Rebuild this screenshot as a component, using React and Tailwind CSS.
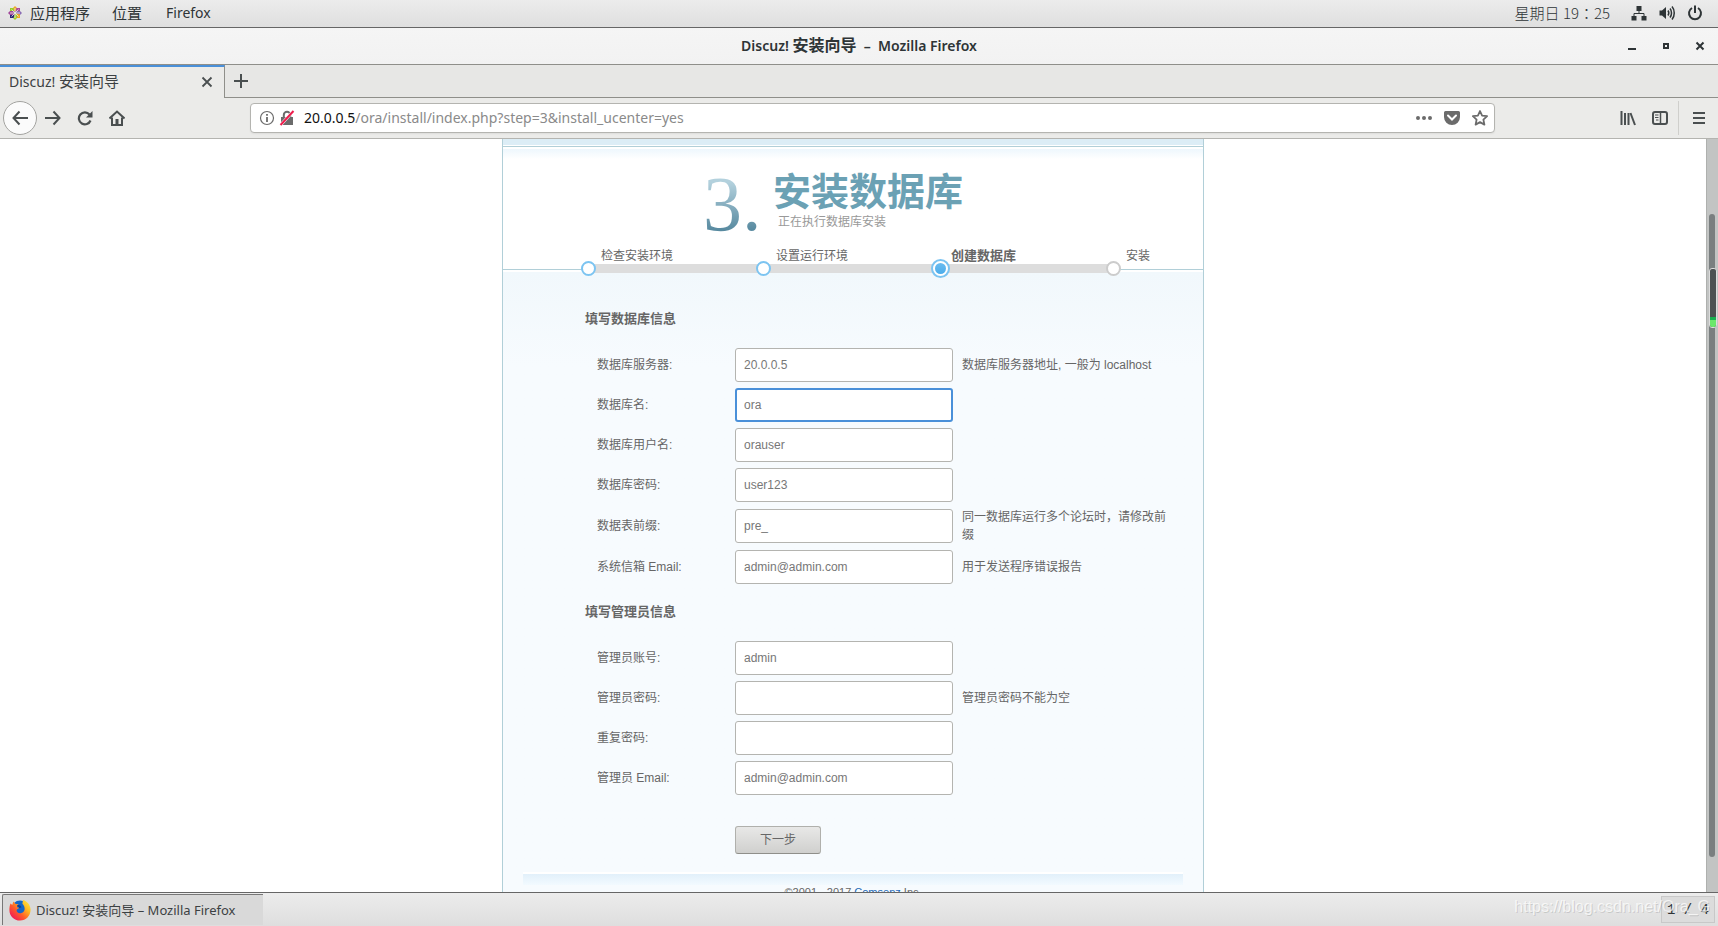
const UI_FONT = "font-['Noto_Sans','Noto_Sans_CJK_SC',sans-serif]";
const PAGE_FONT = "font-['Liberation_Sans','Noto_Sans_CJK_SC',sans-serif]";

const steps = [
  { label: '检查安装环境', state: 'done' },
  { label: '设置运行环境', state: 'done' },
  { label: '创建数据库', state: 'current' },
  { label: '安装', state: 'todo' },
];

const dbFields = [
  { id: 'dbhost', label: '数据库服务器:', value: '20.0.0.5', tip: '数据库服务器地址, 一般为 localhost' },
  { id: 'dbname', label: '数据库名:', value: 'ora', active: true },
  { id: 'dbuser', label: '数据库用户名:', value: 'orauser' },
  { id: 'dbpw', label: '数据库密码:', value: 'user123' },
  { id: 'tablepre', label: '数据表前缀:', value: 'pre_', tip: '同一数据库运行多个论坛时，请修改前缀' },
  { id: 'adminemail', label: '系统信箱 Email:', value: 'admin@admin.com', tip: '用于发送程序错误报告' },
];

const adminFields = [
  { id: 'username', label: '管理员账号:', value: 'admin' },
  { id: 'password', label: '管理员密码:', type: 'password', value: '', tip: '管理员密码不能为空' },
  { id: 'password2', label: '重复密码:', type: 'password', value: '' },
  { id: 'email', label: '管理员 Email:', value: 'admin@admin.com' },
];

function Icon({ size = 16, className = '', children }) {
  return (
    <svg
      width={size}
      height={size}
      viewBox="0 0 16 16"
      fill="none"
      stroke="currentColor"
      strokeWidth="2"
      className={`shrink-0 ${className}`}
      aria-hidden="true"
    >
      {children}
    </svg>
  );
}

function CentosLogo() {
  return (
    <svg width="14" height="14" viewBox="0 0 14 14" className="shrink-0" aria-hidden="true">
      <path d="M7 0l2 2v4.500L7 7 5 6.500V2z" fill="#efa724" />
      <path d="M2 2h3.500l1.500 5-5-1.500z" fill="#9ccd2a" />
      <path d="M12 2v3.500L7 7l1.500-5z" fill="#b04a9c" />
      <path d="M14 7l-2 2H7.500L7 7l.5-2H12z" fill="#8a6cb4" />
      <path d="M12 12H8.500L7 7l5 1.500z" fill="#efa724" />
      <path d="M7 14l-2-2V7.500L7 7l2 .5V12z" fill="#9ccd2a" />
      <path d="M2 12V8.500L7 7l-1.500 5z" fill="#262577" />
      <path d="M0 7l2-2h4.500L7 7l-.5 2H2z" fill="#a0479a" />
      <path d="M7 2v10M2 7h10M3.500 3.500l7 7M10.500 3.500l-7 7" stroke="#ececec" strokeWidth=".8" />
    </svg>
  );
}

function FirefoxLogo() {
  return (
    <svg width="22" height="22" viewBox="0 0 22 22" className="shrink-0" aria-hidden="true">
      <defs>
        <linearGradient id="fox" x1="1" y1="0" x2="0.100" y2="0.900">
          <stop offset="0" stopColor="#fff44f" />
          <stop offset=".35" stopColor="#ffb81f" />
          <stop offset=".65" stopColor="#ff5a2a" />
          <stop offset="1" stopColor="#f0145a" />
        </linearGradient>
      </defs>
      <circle cx="11" cy="10" r="8.500" fill="#1467c8" />
      <path
        d="M1.500 4.500L3.300 6 4.300 2.500 7 5.200c1.200-.3 2.200 0 2.600.8-1 .5-1.800 1-1.600 2.200l2.200.4c-.2 1.200-2 1.400-2.600 2.400-.3 2 1.800 3.600 4.200 3.200 3-.5 4.200-2.700 3.800-5.200-.3-2-1.200-3.300-2.200-4.200L14 1c3 .6 7.500 4.200 7.600 9.600C21.600 17 17 21.600 11 21.600S.4 17 .4 11c0-2.400.3-4.600 1.100-6.500z"
        fill="url(#fox)"
      />
      <path d="M8 6.200c2.500-.6 4.500.8 4.300 2.300L10.200 9z" fill="#123f8e" />
    </svg>
  );
}

function TopPanel() {
  return (
    <header className="flex h-7 shrink-0 items-center border-b border-[#666] bg-linear-to-b from-[#ececec] to-[#dfdfdf] pr-[15px] pb-0.5 pl-2 text-sm text-[#2e3436]">
      <button className="flex items-center gap-2">
        <CentosLogo />
        <span className="text-[15px] leading-6">应用程序</span>
      </button>
      <button className="ml-[22px] text-[15px] leading-6">位置</button>
      <button className="ml-6">Firefox</button>
      <span className="ml-auto font-['Noto_Sans_CJK_TC',sans-serif] text-[15px] leading-6 font-light">星期日 19：25</span>
      <div className="ml-[21px] flex items-center gap-3">
        <Icon>
          <path d="M5.500 1h5v5h-5zM.5 11h5v4.500h-5zM10.500 11h5v4.500h-5z" fill="currentColor" stroke="none" />
          <path d="M8 5v3.500M3 11V8.500h10V11" strokeWidth="1" />
        </Icon>
        <Icon>
          <path d="M.5 5.500H3L7 2v12l-4-3.500H.5z" fill="currentColor" stroke="none" />
          <path d="M9 5.500c1 1.500 1 3.500 0 5M11 3.500c2 2.500 2 6.500 0 9M13 1.500c3 3.500 3 9.500 0 13" strokeWidth="1.500" />
        </Icon>
        <Icon>
          <path d="M5 3a6 6 0 1 0 6 0M8 .5V8" strokeWidth="2" />
        </Icon>
      </div>
    </header>
  );
}

function TitleBar() {
  return (
    <div className="grid h-[37px] shrink-0 grid-cols-[1fr_auto_1fr] items-center border-b border-[#8f8f8a] bg-linear-to-b from-[#f5f5f5] to-[#f2f2f2] text-[#2e3436]">
      <h1 className="col-start-2 pb-0.5 text-sm font-semibold">
        Discuz! <span className="text-base leading-6">安装向导</span> &nbsp;–&nbsp; Mozilla Firefox
      </h1>
      <div className="flex justify-end gap-[18px] pr-[10px]">
        <button aria-label="最小化">
          <Icon><path d="M4 11h8" /></Icon>
        </button>
        <button aria-label="最大化">
          <Icon><path d="M6 6h4v4H6z" /></Icon>
        </button>
        <button aria-label="关闭">
          <Icon><path d="M4.500 4.500l7 7M11.500 4.500l-7 7" /></Icon>
        </button>
      </div>
    </div>
  );
}

function TabStrip() {
  return (
    <div className="flex h-[33px] shrink-0 bg-[#e7e7e5] text-[#4a4f50]">
      <div className="flex w-[225px] items-center justify-between border-t-2 border-r border-t-[#4a90d9] border-r-[#8f8f8a] bg-[#ebebe9] pr-[9px] pb-1 pl-[9px]">
        <span className="text-sm text-[#3c4143]">
          Discuz! <span className="text-[15px] leading-6">安装向导</span>
        </span>
        <button aria-label="关闭标签页" className="pt-0.5">
          <Icon><path d="M3.500 3.500l9 9M12.500 3.500l-9 9" strokeWidth="1.800" /></Icon>
        </button>
      </div>
      <div className="flex flex-1 items-center border-b border-[#8f8f8a] pl-2">
        <button aria-label="新建标签页">
          <Icon><path d="M8 1v14M1 8h14" strokeWidth="2" /></Icon>
        </button>
      </div>
    </div>
  );
}

function NavBar() {
  return (
    <nav className="flex h-[41px] shrink-0 items-center border-b border-[#b4b4b0] bg-[#ebebe9] pr-[11px] pl-[3px] text-[#4a4f50]">
      <button
        aria-label="后退"
        className="flex size-[34px] items-center justify-center rounded-full border border-[#a3a3a0] bg-[#fbfbfb]"
      >
        <Icon><path d="M7.500 1.500L1.500 8l6 6.500M1.500 8H16" /></Icon>
      </button>
      <div className="ml-2 flex items-center gap-4">
        <button aria-label="前进">
          <Icon><path d="M8.500 1.500l6 6.500-6 6.500M14.500 8H0" /></Icon>
        </button>
        <button aria-label="刷新">
          <Icon>
            <path d="M12.500 4.500A6 6 0 1 0 13.500 10.500" strokeWidth="2.200" />
            <path d="M15.500 1v6.500H9z" fill="currentColor" stroke="none" />
          </Icon>
        </button>
        <button aria-label="主页">
          <Icon>
            <path d="M.5 8.500L8 1.500l7.500 7" />
            <path d="M3 7.500V15h10V7.500" />
            <path d="M6.500 9h3v6h-3z" fill="currentColor" stroke="none" />
          </Icon>
        </button>
      </div>
      <div className="ml-[125px] flex h-[30px] flex-1 items-center rounded-[4px] border border-[#b4b4b0] bg-white pr-1.5 pl-2 text-[#6b6b6b] shadow-[0_1px_2px_rgba(0,0,0,0.06)]">
        <Icon>
          <circle cx="8" cy="8" r="6.500" strokeWidth="1.200" />
          <path d="M8 7v5M8 4v1.800" strokeWidth="1.800" />
        </Icon>
        <Icon className="ml-1">
          <path d="M2 7h12v8H2z" fill="currentColor" stroke="none" />
          <path d="M4.800 7V5a3.200 3.200 0 0 1 6.400 0v2" strokeWidth="2" />
          <path d="M1.500 15L14.500 1" stroke="#fff" strokeWidth="3" />
          <path d="M1.500 15L14.500 1" stroke="#ed1c4c" strokeWidth="2" />
        </Icon>
        <div role="textbox" aria-label="地址" className="ml-[9px] flex-1 text-sm text-[#8a8a8a]">
          <span className="text-[#111]">20.0.0.5</span>/ora/install/index.php?step=3&amp;install_ucenter=yes
        </div>
        <div className="flex items-center gap-3">
          <button aria-label="页面操作">
            <Icon>
              <path d="M2 6a2 2 0 1 0 0 4 2 2 0 0 0 0-4zM8 6a2 2 0 1 0 0 4 2 2 0 0 0 0-4zM14 6a2 2 0 1 0 0 4 2 2 0 0 0 0-4z" fill="currentColor" stroke="none" />
            </Icon>
          </button>
          <button aria-label="Pocket">
            <Icon>
              <path d="M1.500 1h13A1.500 1.500 0 0 1 16 2.500V7a8 8 0 0 1-16 0V2.500A1.500 1.500 0 0 1 1.500 1z" fill="currentColor" stroke="none" />
              <path d="M4 5.500l4 4 4-4" stroke="#fff" strokeLinecap="round" />
            </Icon>
          </button>
          <button aria-label="收藏">
            <Icon>
              <path d="M8 1l2.100 4.600 5 .6-3.700 3.400 1 5L8 12.100l-4.400 2.500 1-5L.9 6.200l5-.6z" strokeWidth="1.800" strokeLinejoin="round" />
            </Icon>
          </button>
        </div>
      </div>
      <div className="ml-[125px] flex items-center gap-4">
        <button aria-label="书库">
          <Icon>
            <path d="M1.500 1v14M5 3v12M8.500 3v12" />
            <path d="M10.500 3l4.500 12" />
          </Icon>
        </button>
        <button aria-label="侧栏">
          <Icon>
            <rect x="1" y="2" width="14" height="12" rx="2" />
            <path d="M8.500 2v12" strokeWidth="1.500" />
            <path d="M3 5h3.500M3 7.500h3.500M4 10h2.500" strokeWidth="1" />
          </Icon>
        </button>
      </div>
      <div className="ml-[10px] h-[34px] w-px bg-[#cfcfcc]" />
      <button aria-label="打开菜单" className="ml-3">
        <Icon><path d="M2 3h12M2 8h12M2 13h12" /></Icon>
      </button>
    </nav>
  );
}

function StepDot({ state }) {
  if (state === 'current') {
    return (
      <span className="-ml-[7px] flex size-[19px] shrink-0 items-center justify-center rounded-full border-2 border-[#7cc4f1] bg-white">
        <span className="size-[11px] rounded-full bg-linear-to-b from-[#6bbcf0] to-[#4badeb]" />
      </span>
    );
  }
  return (
    <span
      className={`-ml-[7px] size-[15px] shrink-0 rounded-full border-2 bg-white ${
        state === 'done' ? 'border-[#7cc4f1]' : 'border-[#ccc]'
      }`}
    />
  );
}

function InstallHeader() {
  return (
    <div className="mt-px border-y border-[#b1cfd8] bg-white pt-0.5">
      <div className="h-[10px] bg-linear-to-b from-[#eef7fd] to-white" />
      <div className="mt-[9px] flex pl-[200px]">
        <div className="w-[70px] bg-linear-to-b from-[#b3d1dd] from-20% to-[#457c94] bg-clip-text font-['Liberation_Serif',serif] text-[78px] leading-[72px] text-transparent">
          3.
        </div>
        <div>
          <h2 className="pt-0.5 text-[38px] leading-[44px] font-bold text-[#6ba1b4]">安装数据库</h2>
          <p className="pl-[5px] leading-4 text-[#999]">正在执行数据库安装</p>
        </div>
      </div>
      <ol className="relative mt-2 -mb-1 flex pl-[85px]">
        {steps.map((step, i) => (
          <li key={step.label} className={i < steps.length - 1 ? 'w-[175px]' : ''}>
            <div className={`pl-[13px] leading-4 ${step.state === 'current' ? 'text-[13px] font-bold' : ''}`}>
              {step.label}
            </div>
            <div className={`flex h-[9px] items-center ${i < steps.length - 1 ? 'bg-[#ddd]' : ''}`}>
              <StepDot state={step.state} />
            </div>
          </li>
        ))}
      </ol>
    </div>
  );
}

function Field({ field }) {
  return (
    <div className="flex items-center py-[3px] pl-[94px]">
      <label htmlFor={field.id} className="w-[138px]">{field.label}</label>
      <input
        id={field.id}
        type={field.type || 'text'}
        defaultValue={field.value}
        className={`h-[34px] w-[218px] rounded-[3px] bg-white text-[#777] outline-none ${
          field.active ? 'border-2 border-[#4a90d9] px-[7px]' : 'border border-[#b4b4b0] px-2'
        }`}
      />
      {field.tip && <p className="ml-[9px] w-[206px]">{field.tip}</p>}
    </div>
  );
}

function FieldGroup({ title, fields }) {
  return (
    <fieldset>
      <legend className="pt-[13px] pb-[14px] pl-[82px] text-[13px] leading-6 font-bold">{title}</legend>
      {fields.map((field) => (
        <Field key={field.id} field={field} />
      ))}
    </fieldset>
  );
}

function InstallPage() {
  return (
    <main className={`w-[702px] border-x border-[#b1cfd8] bg-white text-xs leading-[18px] text-[#666] ${PAGE_FONT}`}>
      <div className="h-1.5 bg-[#dcedf6]" />
      <InstallHeader />
      <div className="border-t-2 border-white bg-linear-to-b from-[#f1f8fc] to-[#f7fbfe] to-15% pt-[22px]">
        <form onSubmit={(e) => e.preventDefault()}>
          <FieldGroup title="填写数据库信息" fields={dbFields} />
          <FieldGroup title="填写管理员信息" fields={adminFields} />
          <button
            type="submit"
            className="mt-7 ml-[232px] block h-7 w-[86px] rounded-[3px] border border-[#b0b0ac] border-b-[#8f8f8a] bg-linear-to-b from-[#e8e8e7] to-[#d0d0ce]"
          >
            下一步
          </button>
        </form>
        <footer className="mx-5 mt-[18px] border-t-2 border-white text-center text-[11px] leading-[14px]">
          <div className="h-[11px] bg-linear-to-b from-[#e2f0fa] to-[#f2faff]" />
          <p>
            ©2001 - 2017 <a href="#comsenz" className="text-[#1e6ab8]">Comsenz</a> Inc.
          </p>
        </footer>
      </div>
    </main>
  );
}

function Scrollbar() {
  return (
    <div className="relative flex w-3 flex-col border-l border-[#aeb0ae] bg-[#c2c4c3] pr-[3px] pl-0.5">
      <div className="mt-[75px] mb-[35px] flex-1 rounded-full bg-[#7a7f80]" />
      <div className="absolute top-[129px] right-px flex h-[60px] w-2 flex-col justify-end overflow-hidden rounded-[3px] border border-[#ddd] bg-[#4c5152]">
        <div className="h-[10px] bg-linear-to-b from-[#16b04e] from-30% to-[#6be86b] to-30%" />
      </div>
    </div>
  );
}

function TaskBar() {
  return (
    <footer className="relative flex h-[34px] shrink-0 items-center border-t border-[#666] bg-linear-to-b from-[#ececec] to-[#dedede] pr-[3px] pl-0.5 text-[#3c4143]">
      <button className="flex h-[31px] w-[261px] items-center gap-[5px] rounded-tl-[2px] border-t border-l border-[#777] bg-[#d9d9d9] pl-1.5 text-[13px] leading-6">
        <FirefoxLogo />
        <span>Discuz! 安装向导 – Mozilla Firefox</span>
      </button>
      <div className="ml-auto flex h-[27px] w-[54px] items-center justify-center border border-[#c8c8c8] bg-[#dcdcdc] font-['Liberation_Mono',monospace] text-sm text-[#2e3436]">
        1 / 4
      </div>
      <span className="absolute top-1 right-2 font-['Liberation_Sans',sans-serif] text-base leading-5 text-white/70 [text-shadow:1px_1px_0_rgba(0,0,0,0.12)]">
        https://blog.csdn.net/Ora_G
      </span>
    </footer>
  );
}

export default function App() {
  return (
    <div className={`flex h-screen flex-col overflow-hidden bg-white ${UI_FONT}`}>
      <TopPanel />
      <TitleBar />
      <TabStrip />
      <NavBar />
      <div className="flex min-h-0 flex-1">
        <div className="flex flex-1 items-start justify-center overflow-hidden">
          <InstallPage />
        </div>
        <Scrollbar />
      </div>
      <TaskBar />
    </div>
  );
}
